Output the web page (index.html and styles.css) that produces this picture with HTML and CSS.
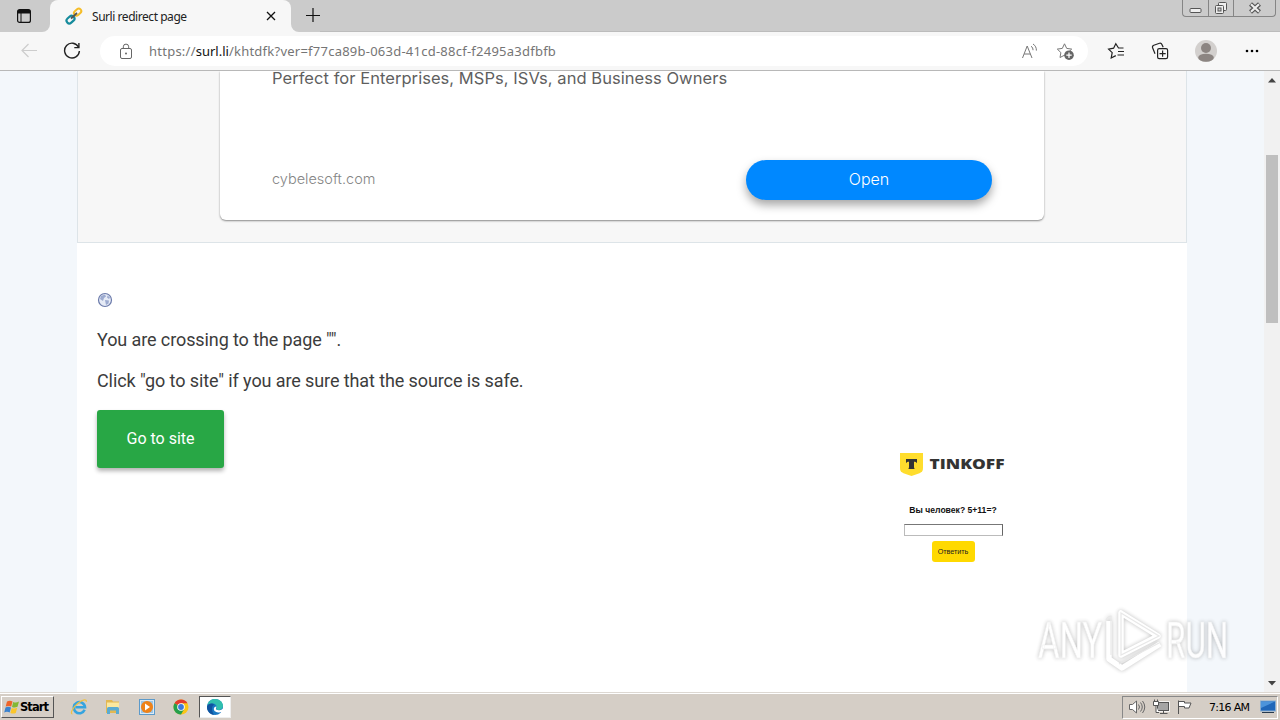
FILE: index.html
```html
<!DOCTYPE html>
<html lang="en">
<head>
    <meta charset="UTF-8">
    <meta name="viewport" content="width=device-width, initial-scale=1.0">
    <title>Surli redirect page</title>
    <link rel="stylesheet" href="styles.css">
</head>
<body>

<!-- Tab strip -->
<div class="tabstrip">
    <div class="tab-actions">
        <svg width="16" height="16" viewBox="0 0 16 16"><rect x="1.6" y="1.6" width="12.8" height="12.8" rx="2" fill="none" stroke="#111" stroke-width="1.2"/><path d="M2 2h12v3.5H2z" fill="#111"/><path d="M5 5v9" stroke="#111"/></svg>
    </div>
    <div class="tab">
        <svg width="18" height="18" viewBox="0 0 18 18" fill="none"><rect x="8.6" y="2.6" width="8" height="5" rx="2.5" transform="rotate(-42 12.6 5.1)" stroke="#f5bd28" stroke-width="2"/><rect x="1.2" y="9.8" width="8.6" height="5.6" rx="2.8" transform="rotate(-42 5.5 12.6)" stroke="#168b9c" stroke-width="2.2"/><path d="M6 11.5l6-5.5" stroke="#555" stroke-width="1.8"/></svg>
        <span class="tab-title">Surli redirect page</span>
        <svg class="tab-close" width="10" height="10" viewBox="0 0 10 10"><path d="M1 1l8 8M9 1l-8 8" stroke="#111" stroke-width="1.3"/></svg>
    </div>
    <svg class="new-tab" width="14" height="14" viewBox="0 0 14 14"><path d="M7 0v14M0 7.5h14" stroke="#111" stroke-width="1.2"/></svg>
    <div class="window-buttons">
        <span><svg width="13" height="16" viewBox="0 0 13 16"><rect x="1" y="8.5" width="11" height="4" rx="1" fill="#eee" stroke="#555"/></svg></span>
        <span><svg width="14" height="16" viewBox="0 0 14 16" fill="#eee" stroke="#555"><rect x="4.5" y="2.5" width="8" height="8" rx="1"/><rect x="1.5" y="5.5" width="8" height="8" rx="1"/><rect x="4" y="8" width="3" height="3" fill="#ccc"/></svg></span>
        <span><svg width="14" height="16" viewBox="0 0 14 16"><path d="M2.5 4l9 8M11.5 4l-9 8" stroke="#555" stroke-width="4.4"/><path d="M3 4.3l8 7.4M11 4.3l-8 7.4" stroke="#eee" stroke-width="2.2"/></svg></span>
    </div>
</div>

<!-- Address bar -->
<div class="toolbar">
    <svg class="back" width="18" height="16" viewBox="0 0 18 16"><path d="M17 7.5H2M8.5 1L2 7.5 8.5 14" fill="none" stroke="#cdcdcd" stroke-width="1.2"/></svg>
    <svg class="reload" width="18" height="18" viewBox="0 0 18 18"><path d="M15.6 5.2A7.4 7.4 0 1 0 16.4 9" fill="none" stroke="#222" stroke-width="1.4"/><path d="M15.9 1v4.6h-4.6" fill="none" stroke="#222" stroke-width="1.4"/></svg>
    <div class="address">
        <svg class="lock" width="14" height="17" viewBox="0 0 14 17"><rect x="1.5" y="5.5" width="11" height="10" rx="1.5" fill="none" stroke="#666"/><path d="M4.3 5.5V3.8a2.7 2.7 0 0 1 5.4 0v1.7" fill="none" stroke="#666"/><circle cx="7" cy="10.5" r="1" fill="#666"/></svg>
        <span class="url">https://<b>surl.li</b>/khtdfk?ver=f77ca89b-063d-41cd-88cf-f2495a3dfbfb</span>
        <svg class="read" width="17" height="17" viewBox="0 0 17 17" fill="none" stroke="#777"><path d="M1.5 15L6.2 3 11 15M3.2 11h6M10 3.2c1.5 1 2 2.3 2 4M12 1c2.4 1.5 3.5 3.8 3.4 6.6"/></svg>
        <svg width="19" height="19" viewBox="0 0 19 19"><path d="M8.5 1.8l2.2 4.6 5 .7-3.6 3.5.8 4.9-4.4-2.3-4.5 2.3.9-4.900L1.300 7.100l5-.7z" fill="#fff" stroke="#777"/><circle cx="13" cy="13.2" r="4.8" fill="#666"/><path d="M13 10.5v5.4M10.3 13.2h5.4" stroke="#fff" stroke-width="1.2"/></svg>
    </div>
    <svg class="favorites" width="18" height="18" viewBox="0 0 18 18" fill="none" stroke="#222" stroke-width="1.2"><path d="M16.5 6h-5L8.800 1.700 6.600 6.200l-5 .9 3.600 3.600-1 5.300 4.600-2.400M11 9.500h6M10.500 13h6.500"/></svg>
    <svg class="collections" width="18" height="18" viewBox="0 0 18 18" fill="none" stroke="#222" stroke-width="1.2"><path d="M4 11.8L1.600 5.700a2 2 0 0 1 1.200-2.500l5.700-1.900a2 2 0 0 1 2.400 1.100l1.300 2.800"/><rect x="6.6" y="6.6" width="10" height="10" rx="1.6"/><path d="M11.6 8.5v6.2M8.500 11.600h6.200"/></svg>
    <svg class="profile" width="22" height="22" viewBox="0 0 22 22"><circle cx="11" cy="11" r="11" fill="#d3d0ce"/><circle cx="11" cy="8" r="5" fill="#8c8582"/><ellipse cx="11" cy="17.7" rx="7.8" ry="4" fill="#8c8582"/></svg>
    <svg class="more" width="14" height="4" viewBox="0 0 14 4"><circle cx="2" cy="2" r="1.3"/><circle cx="7" cy="2" r="1.3"/><circle cx="12" cy="2" r="1.3"/></svg>
</div>

<!-- Page -->
<div class="viewport">
    <div class="page">
        <div class="ad">
            <div class="ad-card">
                <p class="ad-text">Perfect for Enterprises, MSPs, ISVs, and Business Owners</p>
                <div class="ad-footer">
                    <span class="ad-site">cybelesoft.com</span>
                    <a class="ad-open">Open</a>
                </div>
            </div>
        </div>
        <div class="content">
            <div class="notice">
                <svg class="globe" width="16" height="16" viewBox="0 0 16 16"><circle cx="8" cy="8" r="6.5" fill="#e6ebf6" stroke="#6c7bab" stroke-width="1.2"/><path d="M4 4l4-1.5 1 2-2 1.5-1 3-3-2zM8 8l4 .5-.5 3L9 13l-.5-2.5zM10.5 3.5l2.5 2-1 1.5-2-1.5z" fill="#9dabd0"/></svg>
                <p>You are crossing to the page "".</p>
                <p>Click "go to site" if you are sure that the source is safe.</p>
                <a class="go-btn">Go to site</a>
            </div>
            <div class="preview">
                <svg class="brand" width="108" height="24" viewBox="0 0 108 24"><path d="M1 1h23v15c0 3-1 4-3.5 5.300L12.500 24 4.500 21.300C2 20 1 19 1 16z" fill="#ffdd2d"/><path d="M7 7h11v4.200c-.8-1-1.600-1.400-3-1.400v5.200c0 1 .3 1.600.8 2H9.200c.5-.4.8-1 .8-2V9.800c-1.400 0-2.200.4-3 1.400z" fill="#333"/><text x="30.5" y="16.9" textLength="75" lengthAdjust="spacingAndGlyphs">TINKOFF</text></svg>
                <div class="question">Вы человек? 5+11=?</div>
                <div class="answer"></div>
                <div class="submit">Ответить</div>
            </div>
        </div>
    </div>
    <div class="scrollbar">
        <svg width="8" height="5" viewBox="0 0 8 5"><path d="M4 0l4 4.500H0z" fill="#444"/></svg>
        <div class="thumb"></div>
        <svg class="scroll-down" width="8" height="5" viewBox="0 0 8 5"><path d="M4 4.500L8 0H0z" fill="#444"/></svg>
    </div>
</div>

<!-- Taskbar -->
<div class="taskbar">
    <div class="start">
        <svg width="16" height="16" viewBox="0 0 16 16"><path d="M3 2.500q3-1.500 5.500 0L7.200 7.600q-2.700-1.300-5.500 0z" fill="#ee6429"/><path d="M9.200 2.900q2.500 1.300 5.800-.3l-1.500 5.200q-3 1.500-5.500.1z" fill="#83b835"/><path d="M1.500 8.400q2.800-1.300 5.500.1L5.700 13.400q-2.700-1.400-5.500 0z" fill="#3b82ce"/><path d="M7.700 8.900q2.600 1.300 5.500-.1l-1.400 5.100q-2.800 1.400-5.400 0z" fill="#fbc62b"/></svg>
        Start
    </div>
    <div class="launchers">
        <svg width="18" height="18" viewBox="0 0 18 18" fill="none"><path d="M14.600 11.800A5.600 5.600 0 1 1 15 9.200H5.500" stroke="#35a4df" stroke-width="2.600"/><path d="M2.400 15.800C0 16 2 10 8 5.300c5-4 9-4.500 8.300-1.500" stroke="#efc143" stroke-width="1.200"/></svg>
        <svg width="18" height="18" viewBox="0 0 18 18"><path d="M2 2h6l1 1.500h6V15H2z" fill="#e3b852"/><path d="M3 4.500h12v7H3z" fill="#fbe89f"/><path d="M3 16v-5.500q0-1.500 1.500-1.500h9Q15 9 15 10.500V16h-3v-3.500H6V16z" fill="#5aabd2"/></svg>
        <svg width="18" height="18" viewBox="0 0 18 18"><rect x="1.500" y="1.500" width="15" height="15" fill="#dceaf5" stroke="#5c9aca"/><rect x="3" y="3" width="12" height="12" fill="#9cc6e7"/><circle cx="9" cy="9" r="6" fill="#ef8218"/><path d="M7 5.500v7l5-3.500z" fill="#fff"/></svg>
        <svg width="18" height="18" viewBox="0 0 18 18"><circle cx="9" cy="9" r="7.500" fill="#fbc516"/><path d="M9 9L2.500 5.250A7.500 7.500 0 0 1 15.500 5.250H9z" fill="#e33b2e"/><path d="M2.500 5.250A7.500 7.500 0 0 0 9 16.500L12.200 11 9 9z" fill="#249f4c"/><circle cx="9" cy="9" r="3.800" fill="#fff"/><circle cx="9" cy="9" r="2.900" fill="#3d79dc"/></svg>
    </div>
    <div class="active-app">
        <svg width="18" height="18" viewBox="0 0 18 18"><circle cx="9" cy="9" r="8" fill="#1877c2"/><path d="M1.200 8C2 3.500 5 1 9 1c4.500 0 8 3.300 8 6.800 0 2.500-2 4.200-4.300 4.200-1.700 0-2.800-.7-2.300-1.500C11.500 7.500 9 5.500 6.200 5.500 3.700 5.500 1.800 6.800 1.200 8z" fill="#30bfae"/><path d="M10.300 8.500c.3 1-.6 1.500-.3 2.500.5 1.500 4 1.800 6.800-.3l.5 1.500-1.500 1.800c-3 1.200-8 .2-8-3 0-1.500 1.200-2.500 2.500-2.500z" fill="#fff"/><path d="M1 8.500C2 5 7 4.500 8.500 7 5.500 7.500 5 12 8 16.900 4 16.500.7 13 1 8.500z" fill="#0f539f"/></svg>
    </div>
    <div class="tray">
        <svg width="18" height="16" viewBox="0 0 18 16" fill="none" stroke="#666"><path d="M1.500 5.500h3L8.500 2v12l-4-3.500h-3z" fill="#fff"/><path d="M10.500 5.500q2 2.500 0 5M12.500 3.500q3.500 4.500 0 9M14.500 2q4.500 6 0 12"/></svg>
        <svg width="18" height="16" viewBox="0 0 18 16" stroke="#555"><rect x="5.500" y="3.500" width="11" height="8" fill="#aaa" stroke="#fff" stroke-width="2.500"/><rect x="5.500" y="3.500" width="11" height="8" fill="#a5a5a5"/><path d="M8 14.500h7.500M11.500 12v2"/><path d="M1.500 2.500h5v4h-5zM2.500.5v2M5.500.5v2M4 6.500v7h3" fill="#fff"/></svg>
        <svg width="18" height="16" viewBox="0 0 18 16"><path d="M2.500 15V1.500M2.500 2.500h6v1.500h6.500l-2 5H8.500V7.500h-6" fill="#fff" stroke="#555"/></svg>
        <span class="clock">7:16 AM</span>
        <svg width="16" height="14" viewBox="0 0 16 14"><rect x=".5" y="1" width="15" height="10" fill="#2067b9" stroke="#87add1"/><path d="M1 1.500h14L1 8z" fill="#4c94db"/><path d="M2 12.500h12" stroke="#26394d"/></svg>
    </div>
</div>

<!-- Watermark over the page -->
<div class="watermark">
    <span>ANY</span>
    <svg width="62" height="66" viewBox="76 5 62 66">
        <path d="M93 10v42l37-19zM81 18v38l13 9 38-24" fill="none" stroke="#fff" stroke-width="5.5" stroke-linejoin="round"/>
        <path d="M93 10v42l38-19zM78 17q2-4 5-4v39M91 61l40-21" fill="none" stroke="#e4e4e4" stroke-width="1.2"/>
    </svg>
    <span>RUN</span>
</div>

</body>
</html>
```
FILE: styles.css
```css
body {
    margin: 0;
    width: 1280px;
    height: 720px;
    overflow: hidden;
    position: relative;
    display: flex;
    flex-direction: column;
    font-family: 'Roboto', sans-serif;
    background-color: #fff;
}

* {
    box-sizing: border-box;
}

svg {
    display: block;
    flex-shrink: 0;
}

/* Browser tabs */
.tabstrip {
    height: 32px;
    flex-shrink: 0;
    display: flex;
    align-items: flex-start;
    background-color: #f7f7f7;
}

.tab-actions {
    width: 50px;
    height: 32px;
    padding: 8px 0 0 16px;
    background-color: #cbcbcb;
    border-bottom-right-radius: 8px;
}

.tab {
    width: 241px;
    height: 32px;
    display: flex;
    align-items: center;
    padding: 0 15px 0 15px;
    background-color: #f7f7f7;
    border-radius: 8px 8px 0 0;
    box-shadow: 0 -8px 0 #cbcbcb;
}

.tab-title {
    margin-left: 9px;
    font-family: 'Noto Sans', sans-serif;
    font-size: 12px;
    letter-spacing: -0.45px;
    color: #222;
}

.tab-close {
    margin-left: auto;
}

.new-tab {
    box-sizing: content-box;
    padding: 8px 0 10px 15px;
    background-color: #cbcbcb;
    border-bottom-left-radius: 8px;
}

.window-buttons {
    flex: 1;
    height: 32px;
    display: flex;
    justify-content: flex-end;
    padding-right: 4px;
    background-color: #cbcbcb;
    border-bottom: 1px solid #bcbcbc;
}

.window-buttons span {
    width: 25px;
    height: 17px;
    display: flex;
    justify-content: center;
    border: 1px solid #858585;
    border-width: 0 0 1px 1px;
}

.window-buttons span:first-child {
    width: 26px;
    border-bottom-left-radius: 4px;
}

.window-buttons span:last-child {
    width: 43px;
    border-right-width: 1px;
    border-bottom-right-radius: 4px;
}

/* Address row */
.toolbar {
    height: 39px;
    flex-shrink: 0;
    display: flex;
    align-items: center;
    padding-left: 20px;
    background-color: #f7f7f7;
    border-bottom: 1px solid #b8b8b8;
}

.reload {
    margin-left: 25px;
}

.address {
    width: 988px;
    height: 30px;
    display: flex;
    align-items: center;
    margin-left: 19px;
    padding: 0 13px 0 19px;
    background-color: #fff;
    border-radius: 15px;
}

.url {
    margin-left: 16px;
    font-family: 'Noto Sans', sans-serif;
    font-size: 13px;
    letter-spacing: 0.24px;
    color: #757575;
}

.url b {
    font-weight: normal;
    letter-spacing: 0;
    color: #111;
}

.read {
    margin-left: auto;
    margin-right: 18px;
}

.favorites {
    margin-left: 19px;
}

.collections {
    margin-left: 26px;
}

.profile {
    margin-left: 26px;
}

.more {
    margin-left: 28px;
}

/* Page area */
.viewport {
    height: 621px;
    flex-shrink: 0;
    display: flex;
    background-color: #f3f7fb;
}

.page {
    width: 1110px;
    margin-left: 77px;
    background-color: #fff;
}

.ad {
    height: 172px;
    padding-left: 142px;
    background-color: #f7f7f7;
    border: 1px solid #dde4e8;
    border-top: none;
}

.ad-card {
    width: 824px;
    height: 149px;
    padding: 0 52px;
    background-color: #fff;
    border-radius: 0 0 6px 6px;
    box-shadow: 0 1px 2px rgba(0, 0, 0, 0.45);
    clip-path: inset(0 -5px -5px -5px);
    font-family: 'Inter', 'Roboto', sans-serif;
}

.ad-text {
    height: 89px;
    margin: 0;
    line-height: 15px;
    font-size: 16.5px;
    letter-spacing: 0.05px;
    color: #5f5f5f;
    white-space: nowrap;
}

.ad-footer {
    display: flex;
    justify-content: space-between;
    align-items: center;
}

.ad-site {
    padding-bottom: 3px;
    font-size: 14.5px;
    font-weight: 300;
    color: #858585;
}

.ad-open {
    width: 246px;
    height: 40px;
    line-height: 39px;
    text-align: center;
    font-size: 16px;
    font-weight: 300;
    color: #fff;
    background-color: #0088ff;
    border-radius: 20px;
    box-shadow: 0 5px 10px rgba(0, 0, 0, 0.35);
}

.content {
    display: flex;
    padding: 49px 20px 0;
}

.notice {
    width: 803px;
}

.notice p {
    margin: 0 0 17px;
    line-height: 24px;
    font-size: 18px;
    letter-spacing: -0.1px;
    color: #3c3c3c;
}

.globe {
    margin-bottom: 20px;
}

.go-btn {
    display: block;
    width: 127px;
    height: 58px;
    line-height: 57px;
    text-align: center;
    font-size: 16px;
    color: #fff;
    background-color: #28a745;
    border-radius: 3px;
    box-shadow: 0 3px 4px rgba(0, 0, 0, 0.3);
}

/* Small preview of the target site */
.preview {
    width: 106px;
    display: flex;
    flex-direction: column;
    align-items: center;
    padding-top: 160px;
    font-family: 'Liberation Sans', sans-serif;
}

.brand text {
    font-family: 'Open Sans', sans-serif;
    font-size: 13.5px;
    font-weight: 800;
    fill: #333;
}

.question {
    margin-top: 28px;
    line-height: 12px;
    font-size: 8.6px;
    font-weight: bold;
    white-space: nowrap;
    color: #111;
}

.answer {
    width: 99px;
    height: 12px;
    margin-top: 8px;
    border: 1px solid #bbb;
    border-top-color: #777;
    border-right-color: #666;
}

.submit {
    width: 43px;
    height: 21px;
    margin-top: 5px;
    line-height: 21px;
    text-align: center;
    font-size: 7.2px;
    color: #222;
    background-color: #ffd900;
    border-radius: 3px;
}

.scrollbar {
    width: 16px;
    margin-left: auto;
    display: flex;
    flex-direction: column;
    align-items: center;
    padding: 7px 0 6px;
    background-color: #f1f1f1;
}

.thumb {
    width: 12px;
    height: 168px;
    margin-top: 72px;
    background-color: #bfbfbf;
}

.scroll-down {
    margin-top: auto;
}

/* Taskbar */
.taskbar {
    height: 28px;
    display: flex;
    align-items: center;
    padding: 1px 2px 0 1px;
    background-color: #d5cec6;
    border-top: 1px solid #ddd8d2;
    box-shadow: inset 0 1px 0 #fff;
    font-family: 'DejaVu Sans', sans-serif;
}

.start {
    width: 53px;
    height: 22px;
    display: flex;
    align-items: center;
    padding-left: 2px;
    font-size: 11.5px;
    font-weight: bold;
    letter-spacing: -0.95px;
    border: 1px solid #fff;
    border-right-color: #555;
    border-bottom-color: #555;
}

.launchers {
    display: flex;
    gap: 16px;
    margin-left: 16px;
}

.active-app {
    width: 32px;
    height: 22px;
    display: flex;
    align-items: center;
    justify-content: center;
    margin-left: 9px;
    background-color: #fff;
    border: 1px solid #555;
    border-right-color: #eee;
    border-bottom-color: #eee;
}

.tray {
    width: 156px;
    height: 23px;
    display: flex;
    align-items: center;
    gap: 6px;
    margin-left: auto;
    padding: 0 1px 0 5px;
    border: 1px solid #888;
    border-right-color: #fff;
    border-bottom-color: #fff;
}

.clock {
    margin: 0 auto 0 9px;
    font-size: 11px;
    letter-spacing: -0.7px;
    white-space: nowrap;
}

/* Lies over the page corner */
.watermark {
    position: absolute;
    left: 1038px;
    top: 608px;
    width: 194px;
    display: flex;
    align-items: center;
    justify-content: space-between;
    opacity: 0.85;
    filter: drop-shadow(0 0 2px rgba(0, 0, 0, 0.3));
}

.watermark span {
    width: 66px;
    line-height: 66px;
    font-size: 50px;
    color: #fff;
    -webkit-text-stroke: 0.6px #eee;
    transform: scaleX(0.66);
    transform-origin: left;
    white-space: nowrap;
}

.watermark span:last-child {
    transform: scaleX(0.63);
}
```
